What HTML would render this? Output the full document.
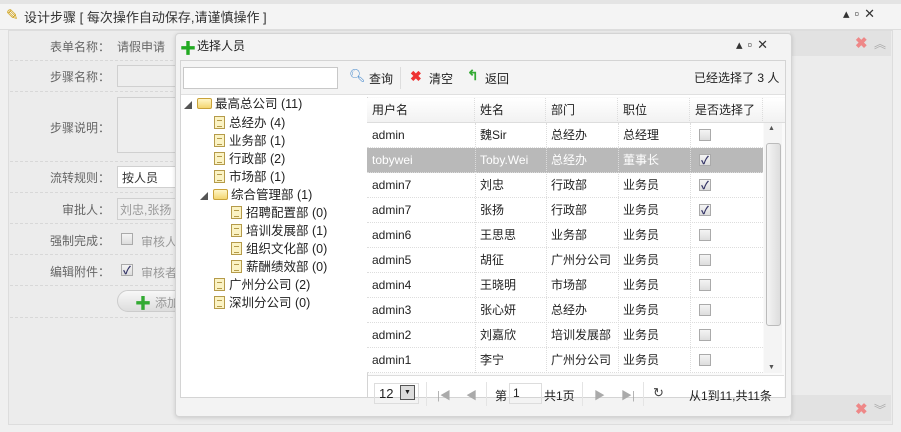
<!DOCTYPE html>
<html><head><meta charset="utf-8"><style>
*{margin:0;padding:0;box-sizing:border-box}
body{width:901px;height:432px;overflow:hidden;background:#f0f0f0;font-family:"Liberation Sans","Noto Sans CJK SC",sans-serif;font-size:12px;color:#222;position:relative}
.a{position:absolute;white-space:nowrap}
.lbl{color:#666;text-align:right;width:110px;left:0}
.dash{position:absolute;left:10px;width:168px;border-top:1px dashed #d8d8d8}
.fin{position:absolute;left:117px;width:60px;height:22px;border:1px solid #d0d0d0;background:#eee}
.cell{position:absolute;height:25px;line-height:25px;padding-left:5px;border-right:1px dotted #ddd}
.row{position:absolute;left:367px;width:396px;height:25px;border-bottom:1px dotted #ddd;background:#fff}
.cb{position:absolute;width:12px;height:12px;border:1px solid #aaa;background:linear-gradient(#f4f4f4,#ddd)}
.ck::after{content:"✓";position:absolute;left:1px;top:-3px;font-size:11px;color:#336;font-weight:bold}
.doc{display:inline-block;width:11px;height:13px;border:1px solid #b59b4a;background:#fbf3c4;vertical-align:-2px;margin-right:4px;position:relative}
.doc::after{content:"";position:absolute;left:2px;top:3px;width:5px;height:5px;border-top:1px solid #b59b4a;border-bottom:1px solid #b59b4a}
.fold{display:inline-block;width:15px;height:11px;border:1px solid #c9a23a;background:linear-gradient(#fff6c8,#f3d56f);border-radius:2px;vertical-align:-1px;margin-right:3px}
.tri{color:#555;font-size:8px;margin-right:5px}
.wb{font-size:13px;color:#333;letter-spacing:5px}
</style></head><body>
<div class="a" style="left:0;top:0;width:901px;height:4px;background:#e4e4e4"></div>
<div class="a" style="left:0;top:4px;width:901px;height:26px;background:#f4f4f4;border-bottom:1px solid #ddd"></div>
<div class="a" style="left:6px;top:6px;font-size:15px;color:#c90">✎</div>
<div class="a" style="left:24px;top:7px;font-size:13px;color:#333">设计步骤 [ 每次操作自动保存,请谨慎操作 ]</div>
<div class="a wb" style="left:843px;top:6px">▴▫✕</div>
<div class="a" style="left:8px;top:30px;width:885px;height:395px;background:#ececec;border:1px solid #ddd"></div>
<div class="a" style="left:790px;top:31px;width:101px;height:25px;background:#e2e2e2"></div>
<div class="a" style="left:855px;top:34px;color:#e88;font-size:15px;font-weight:bold">✖</div>
<div class="a" style="left:874px;top:35px;color:#aaa;font-size:12px">︽</div>
<div class="a" style="left:790px;top:395px;width:101px;height:26px;background:#e2e2e2"></div>
<div class="a" style="left:855px;top:400px;color:#e88;font-size:15px;font-weight:bold">✖</div>
<div class="a" style="left:874px;top:401px;color:#aaa;font-size:12px">︾</div>

<div class="a lbl" style="top:38px">表单名称：</div><div class="a" style="left:117px;top:38px;color:#666">请假申请</div>
<div class="dash" style="top:60px"></div>
<div class="a lbl" style="top:68px">步骤名称：</div><div class="fin" style="top:65px"></div>
<div class="dash" style="top:91px"></div>
<div class="a lbl" style="top:119px">步骤说明：</div><div class="fin" style="top:97px;height:56px"></div>
<div class="dash" style="top:161px"></div>
<div class="a lbl" style="top:169px">流转规则：</div><div class="fin" style="top:166px;background:#fff"></div><div class="a" style="left:122px;top:169px;color:#333">按人员</div>
<div class="dash" style="top:192px"></div>
<div class="a lbl" style="top:201px">审批人：</div><div class="fin" style="top:198px"></div><div class="a" style="left:120px;top:201px;color:#999">刘忠,张扬</div>
<div class="dash" style="top:223px"></div>
<div class="a lbl" style="top:232px">强制完成：</div><div class="cb" style="left:121px;top:233px"></div><div class="a" style="left:141px;top:233px;color:#999">审核人</div>
<div class="dash" style="top:254px"></div>
<div class="a lbl" style="top:263px">编辑附件：</div><div class="cb ck" style="left:121px;top:264px"></div><div class="a" style="left:141px;top:264px;color:#999">审核者</div>
<div class="dash" style="top:285px"></div>
<div class="a" style="left:117px;top:290px;width:70px;height:22px;border:1px solid #ccc;border-radius:11px;background:linear-gradient(#f8f8f8,#ddd)"></div>
<div class="a" style="left:135px;top:290px;color:#3a3;font-size:16px;font-weight:bold">✚</div><div class="a" style="left:155px;top:294px;color:#999">添加</div>
<div class="dash" style="top:317px"></div>

<!-- dialog -->
<div class="a" style="left:175px;top:33px;width:617px;height:384px;background:#f3f3f3;border:1px solid #d4d4d4;border-radius:4px;box-shadow:0 1px 4px rgba(0,0,0,.15)"></div>
<div class="a" style="left:180px;top:35px;color:#2a2;font-size:16px;font-weight:bold">✚</div>
<div class="a" style="left:197px;top:37px;font-size:12px;color:#222">选择人员</div>
<div class="a wb" style="left:736px;top:37px">▴▫✕</div>
<div class="a" style="left:180px;top:60px;width:606px;height:338px;background:#fff;border:1px solid #d4d4d4"></div>
<div class="a" style="left:181px;top:61px;width:604px;height:34px;background:#f4f4f4;border-bottom:1px solid #e0e0e0"></div>
<div class="a" style="left:183px;top:67px;width:155px;height:22px;background:#fff;border:1px solid #c8c8c8"></div>
<div class="a" style="left:349px;top:68px;color:#48c;font-size:13px">🔍︎</div><div class="a" style="left:369px;top:70px">查询</div>
<div class="a" style="left:400px;top:67px;height:22px;border-left:1px solid #ddd"></div>
<div class="a" style="left:410px;top:68px;color:#e33;font-size:14px;font-weight:bold">✖</div><div class="a" style="left:429px;top:70px">清空</div>
<div class="a" style="left:467px;top:67px;color:#3a3;font-size:14px;font-weight:bold">↰</div><div class="a" style="left:485px;top:70px">返回</div>
<div class="a" style="left:694px;top:69px">已经选择了 3 人</div>

<div class="a" style="left:184px;top:96px;line-height:17.9px;font-size:12.5px">
<div><span class="tri">◢</span><span class="fold"></span>最高总公司 (11)</div>
<div style="padding-left:30px"><span class="doc"></span>总经办 (4)</div>
<div style="padding-left:30px"><span class="doc"></span>业务部 (1)</div>
<div style="padding-left:30px"><span class="doc"></span>行政部 (2)</div>
<div style="padding-left:30px"><span class="doc"></span>市场部 (1)</div>
<div style="padding-left:16px"><span class="tri">◢</span><span class="fold"></span>综合管理部 (1)</div>
<div style="padding-left:47px"><span class="doc"></span>招聘配置部 (0)</div>
<div style="padding-left:47px"><span class="doc"></span>培训发展部 (1)</div>
<div style="padding-left:47px"><span class="doc"></span>组织文化部 (0)</div>
<div style="padding-left:47px"><span class="doc"></span>薪酬绩效部 (0)</div>
<div style="padding-left:30px"><span class="doc"></span>广州分公司 (2)</div>
<div style="padding-left:30px"><span class="doc"></span>深圳分公司 (0)</div>
</div>

<div class="a" style="left:367px;top:97px;width:418px;height:300px;border-left:1px solid #d4d4d4;background:#fafafa"></div>
<div class="a" style="left:367px;top:98px;width:418px;height:25px;background:linear-gradient(#fff,#f2f2f2);border-bottom:1px solid #ddd"></div>
<div class="cell" style="left:367px;top:98px;width:108px">用户名</div>
<div class="cell" style="left:475px;top:98px;width:71px">姓名</div>
<div class="cell" style="left:546px;top:98px;width:72px">部门</div>
<div class="cell" style="left:618px;top:98px;width:72px">职位</div>
<div class="cell" style="left:690px;top:98px;width:73px">是否选择了</div>

<div class="row" style="top:123px"></div><div class="row" style="top:148px;background:#b9b9b9"></div><div class="row" style="top:173px"></div><div class="row" style="top:198px"></div><div class="row" style="top:223px"></div><div class="row" style="top:248px"></div><div class="row" style="top:273px"></div><div class="row" style="top:298px"></div><div class="row" style="top:323px"></div><div class="row" style="top:348px"></div>
<div class="a" style="left:367px;top:123px;line-height:25px;width:396px">
<div style="position:relative;height:250px">
<div class="a" style="left:5px;top:0">admin</div><div class="a" style="left:113px;top:0">魏Sir</div><div class="a" style="left:184px;top:0">总经办</div><div class="a" style="left:256px;top:0">总经理</div>
<div class="a" style="left:5px;top:25px;color:#fff">tobywei</div><div class="a" style="left:113px;top:25px;color:#fff">Toby.Wei</div><div class="a" style="left:184px;top:25px;color:#fff">总经办</div><div class="a" style="left:256px;top:25px;color:#fff">董事长</div>
<div class="a" style="left:5px;top:50px">admin7</div><div class="a" style="left:113px;top:50px">刘忠</div><div class="a" style="left:184px;top:50px">行政部</div><div class="a" style="left:256px;top:50px">业务员</div>
<div class="a" style="left:5px;top:75px">admin7</div><div class="a" style="left:113px;top:75px">张扬</div><div class="a" style="left:184px;top:75px">行政部</div><div class="a" style="left:256px;top:75px">业务员</div>
<div class="a" style="left:5px;top:100px">admin6</div><div class="a" style="left:113px;top:100px">王思思</div><div class="a" style="left:184px;top:100px">业务部</div><div class="a" style="left:256px;top:100px">业务员</div>
<div class="a" style="left:5px;top:125px">admin5</div><div class="a" style="left:113px;top:125px">胡征</div><div class="a" style="left:184px;top:125px">广州分公司</div><div class="a" style="left:256px;top:125px">业务员</div>
<div class="a" style="left:5px;top:150px">admin4</div><div class="a" style="left:113px;top:150px">王晓明</div><div class="a" style="left:184px;top:150px">市场部</div><div class="a" style="left:256px;top:150px">业务员</div>
<div class="a" style="left:5px;top:175px">admin3</div><div class="a" style="left:113px;top:175px">张心妍</div><div class="a" style="left:184px;top:175px">总经办</div><div class="a" style="left:256px;top:175px">业务员</div>
<div class="a" style="left:5px;top:200px">admin2</div><div class="a" style="left:113px;top:200px">刘嘉欣</div><div class="a" style="left:184px;top:200px">培训发展部</div><div class="a" style="left:256px;top:200px">业务员</div>
<div class="a" style="left:5px;top:225px">admin1</div><div class="a" style="left:113px;top:225px">李宁</div><div class="a" style="left:184px;top:225px">广州分公司</div><div class="a" style="left:256px;top:225px">业务员</div>
</div></div>
<div class="a" style="left:475px;top:123px;height:250px;border-left:1px dotted #ddd"></div>
<div class="a" style="left:546px;top:123px;height:250px;border-left:1px dotted #ddd"></div>
<div class="a" style="left:618px;top:123px;height:250px;border-left:1px dotted #ddd"></div>
<div class="a" style="left:690px;top:123px;height:250px;border-left:1px dotted #ddd"></div>
<div class="cb" style="left:699px;top:129px"></div>
<div class="cb ck" style="left:699px;top:154px"></div>
<div class="cb ck" style="left:699px;top:179px"></div>
<div class="cb ck" style="left:699px;top:204px"></div>
<div class="cb" style="left:699px;top:229px"></div>
<div class="cb" style="left:699px;top:254px"></div>
<div class="cb" style="left:699px;top:279px"></div>
<div class="cb" style="left:699px;top:304px"></div>
<div class="cb" style="left:699px;top:329px"></div>
<div class="cb" style="left:699px;top:354px"></div>
<div class="a" style="left:764px;top:123px;width:18px;height:250px;background:#f4f4f4"></div>
<div class="a" style="left:768px;top:125px;font-size:7px;color:#555">▲</div>
<div class="a" style="left:766px;top:143px;width:15px;height:183px;border:1px solid #bbb;border-radius:3px;background:linear-gradient(90deg,#f4f4f4,#ddd)"></div>
<div class="a" style="left:768px;top:364px;font-size:7px;color:#555">▼</div>
<div class="a" style="left:368px;top:375px;width:416px;height:22px;background:#fff;border-top:1px solid #ddd"></div>
<div class="a" style="left:374px;top:383px;width:45px;height:21px;border:1px solid #ddd;padding-left:4px;line-height:19px;font-size:13px">12</div>
<div class="a" style="left:400px;top:385px;width:15px;height:15px;border:1px solid #555;background:#ddd;font-size:7px;text-align:center;line-height:14px">▼</div>
<div class="a" style="left:426px;top:382px;height:24px;border-left:1px solid #e4e4e4"></div>
<div class="a" style="left:437px;top:387px;color:#aaa;font-size:11px">|◀</div>
<div class="a" style="left:466px;top:387px;color:#aaa;font-size:11px">◀</div>
<div class="a" style="left:486px;top:382px;height:24px;border-left:1px solid #e4e4e4"></div>
<div class="a" style="left:495px;top:387px">第</div>
<div class="a" style="left:509px;top:383px;width:33px;height:21px;border:1px solid #ddd;padding-left:3px;line-height:19px">1</div>
<div class="a" style="left:544px;top:387px">共1页</div>
<div class="a" style="left:582px;top:382px;height:24px;border-left:1px solid #e4e4e4"></div>
<div class="a" style="left:594px;top:387px;color:#aaa;font-size:11px">▶</div>
<div class="a" style="left:621px;top:387px;color:#aaa;font-size:11px">▶|</div>
<div class="a" style="left:643px;top:382px;height:24px;border-left:1px solid #e4e4e4"></div>
<div class="a" style="left:653px;top:385px;color:#444;font-size:13px">↻</div>
<div class="a" style="left:689px;top:387px">从1到11,共11条</div>
</body></html>
